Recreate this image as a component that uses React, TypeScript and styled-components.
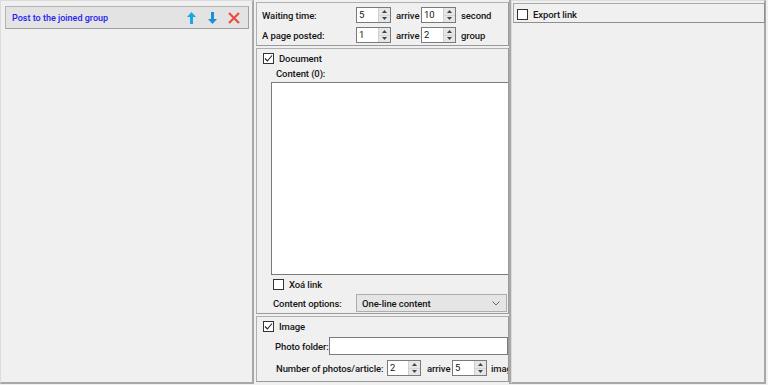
import { FC } from 'react';
import styled, { createGlobalStyle } from 'styled-components';

const GlobalStyle = createGlobalStyle`
  html, body {
    margin: 0;
    padding: 0;
    background: #f0f0f0;
  }
  body {
    font-family: Roboto, 'Noto Sans', sans-serif;
    font-size: 9.5px;
    font-weight: 500;
    letter-spacing: -0.1px;
    color: #151515;
  }
`;

const Window = styled.div`
  display: flex;
  width: 768px;
  height: 385px;
  background: #f0f0f0;
  overflow: hidden;
`;

const Panel = styled.div<{ $width: number }>`
  box-sizing: border-box;
  width: ${(p) => p.$width}px;
  height: 384px;
  border-top: 1px solid #dcdcdc;
  border-left: 1px solid #dcdcdc;
  border-right: 2px solid #a8a8a8;
  border-bottom: 2px solid #a8a8a8;
  flex-shrink: 0;
`;

const LeftPanel = styled(Panel)`
  padding: 5px 4px 0 4px;
`;

const TaskBar = styled.div`
  display: flex;
  align-items: center;
  box-sizing: border-box;
  height: 23px;
  width: 244px;
  padding: 0 8px 0 6px;
  background: #e3e3e3;
  border: 1px solid #b4b4b4;
  border-right-color: #a0a0a0;
  border-bottom-color: #a0a0a0;
`;

const TaskTitle = styled.span`
  flex: 1;
  color: #2222f2;
  font-size: 9px;
  font-weight: 500;
  letter-spacing: 0;
`;

const IconGroup = styled.div`
  display: flex;
  align-items: center;
  gap: 8px;
`;

const IconSlot = styled.span`
  display: flex;
  width: 13px;
  height: 13px;
  align-items: center;
  justify-content: center;
`;

const MiddleColumn = styled.div`
  display: flex;
  flex-direction: column;
  gap: 2px;
  box-sizing: border-box;
  width: 255px;
  height: 384px;
  margin-left: 2px;
  padding-top: 2px;
  border-right: 2px solid #a8a8a8;
  flex-shrink: 0;
`;

const Group = styled.div<{ $height: number }>`
  box-sizing: border-box;
  height: ${(p) => p.$height}px;
  border: 1px solid #b0b0b0;
  border-right-color: #9a9a9a;
  border-bottom-color: #9a9a9a;
  overflow: hidden;
`;

const TimingGroup = styled(Group)`
  display: flex;
  flex-direction: column;
  padding: 2px 0 0 5px;
`;

const Row = styled.div<{ $top?: number; $left?: number; $height?: number }>`
  display: flex;
  align-items: center;
  flex-shrink: 0;
  height: ${(p) => (p.$height ? `${p.$height}px` : 'auto')};
  margin: ${(p) => p.$top ?? 0}px 0 0 ${(p) => p.$left ?? 0}px;
`;

const Label = styled.span<{ $pad?: number; $w?: number }>`
  box-sizing: border-box;
  flex-shrink: 0;
  width: ${(p) => (p.$w ? `${p.$w}px` : 'auto')};
  padding-left: ${(p) => p.$pad ?? 0}px;
  white-space: nowrap;
`;

const SpinBox = styled.div<{ $w?: number }>`
  display: flex;
  flex-shrink: 0;
  box-sizing: border-box;
  width: ${(p) => p.$w ?? 35}px;
  height: 16px;
  border: 1px solid #7a7a7a;
  background: #fff;
`;

const SpinValue = styled.span`
  flex: 1;
  padding-left: 2px;
  line-height: 13px;
  font-weight: 400;
`;

const SpinButtons = styled.span`
  display: flex;
  flex-direction: column;
  width: 11px;
  background: #e6e6e6;
  border-left: 1px solid #d0d0d0;
`;

const SpinHalf = styled.span`
  flex: 1;
  display: flex;
  align-items: center;
  justify-content: center;
  &:first-child {
    border-bottom: 1px solid #d4d4d4;
  }
`;

const SectionGroup = styled(Group)`
  display: flex;
  flex-direction: column;
  padding: 2px 0 0 6px;
`;

const CheckRow = styled.label`
  display: flex;
  align-items: center;
  gap: 5px;
  height: 14px;
  flex-shrink: 0;
`;

const Box = styled.span`
  display: flex;
  align-items: center;
  justify-content: center;
  box-sizing: border-box;
  width: 11px;
  height: 11px;
  border: 1px solid #333;
  background: #fff;
`;

const SubLabel = styled.div`
  margin: 2px 0 0 13px;
  height: 13px;
  line-height: 13px;
  flex-shrink: 0;
`;

const TextArea = styled.div`
  box-sizing: border-box;
  flex-shrink: 0;
  margin: 2px 0 0 8px;
  width: 260px;
  height: 193px;
  background: #fff;
  border: 1px solid #7a7a7a;
  border-right: none;
`;

const Select = styled.div`
  display: flex;
  align-items: center;
  box-sizing: border-box;
  width: 151px;
  height: 18px;
  padding: 0 6px 0 5px;
  background: #e5e5e5;
  border: 1px solid #adadad;
`;

const SelectText = styled.span`
  flex: 1;
`;

const TextInput = styled.div`
  box-sizing: border-box;
  width: 179px;
  height: 18px;
  background: #fff;
  border: 1px solid #7a7a7a;
`;

const RightPanel = styled(Panel)`
  padding: 2px 1px 0 1px;
`;

const ExportBox = styled.div`
  box-sizing: border-box;
  height: 20px;
  width: 252px;
  padding: 3px 0 0 3px;
  border: 1px solid #a8a8a8;
  border-right-color: #8f8f8f;
  border-bottom-color: #8f8f8f;
`;

const Check: FC<{ checked?: boolean }> = ({ checked }) => (
  <Box>
    {checked && (
      <svg width="9" height="9" viewBox="0 0 9 9">
        <path d="M1 4.5 L3.4 7 L8 1.5" fill="none" stroke="#222" strokeWidth="1.1" />
      </svg>
    )}
  </Box>
);

const Spin: FC<{ value: string; w?: number }> = ({ value, w }) => (
  <SpinBox $w={w}>
    <SpinValue>{value}</SpinValue>
    <SpinButtons>
      <SpinHalf>
        <svg width="5" height="3" viewBox="0 0 5 3">
          <path d="M0 3 L2.5 0 L5 3 Z" fill="#444" />
        </svg>
      </SpinHalf>
      <SpinHalf>
        <svg width="5" height="3" viewBox="0 0 5 3">
          <path d="M0 0 L2.5 3 L5 0 Z" fill="#444" />
        </svg>
      </SpinHalf>
    </SpinButtons>
  </SpinBox>
);

const Arrow: FC<{ down?: boolean; color: string }> = ({ down, color }) => (
  <svg
    width="9"
    height="12"
    viewBox="0 0 9 12"
    style={{ transform: down ? 'rotate(180deg)' : undefined }}
  >
    <path d="M4.5 0 L9 5 L6 5 L6 12 L3 12 L3 5 L0 5 Z" fill={color} />
  </svg>
);

const App: FC = () => (
  <>
    <GlobalStyle />
    <Window>
      <LeftPanel $width={254}>
        <TaskBar>
          <TaskTitle>Post to the joined group</TaskTitle>
          <IconGroup>
            <IconSlot>
              <Arrow color="#19a7e6" />
            </IconSlot>
            <IconSlot>
              <Arrow down color="#1b8fdc" />
            </IconSlot>
            <IconSlot>
              <svg width="12" height="12" viewBox="0 0 12 12">
                <path d="M1 1 L11 11 M11 1 L1 11" stroke="#ec4a45" strokeWidth="2.2" />
              </svg>
            </IconSlot>
          </IconGroup>
        </TaskBar>
      </LeftPanel>

      <MiddleColumn>
        <TimingGroup $height={44}>
          <Row $height={20}>
            <Label $w={94}>Waiting time:</Label>
            <Spin value="5" />
            <Label $w={30} $pad={5}>arrive</Label>
            <Spin value="10" />
            <Label $pad={5}>second</Label>
          </Row>
          <Row $height={20}>
            <Label $w={94}>A page posted:</Label>
            <Spin value="1" />
            <Label $w={30} $pad={5}>arrive</Label>
            <Spin value="2" />
            <Label $pad={5}>group</Label>
          </Row>
        </TimingGroup>

        <SectionGroup $height={266}>
          <CheckRow>
            <Check checked />
            <span>Document</span>
          </CheckRow>
          <SubLabel>Content (0):</SubLabel>
          <TextArea />
          <Row $top={2} $left={10}>
            <CheckRow>
              <Check />
              <span>Xoá link</span>
            </CheckRow>
          </Row>
          <Row $top={3} $left={10}>
            <Label $w={83}>Content options:</Label>
            <Select>
              <SelectText>One-line content</SelectText>
              <svg width="8" height="5" viewBox="0 0 8 5">
                <path d="M0.5 0.5 L4 4 L7.5 0.5" fill="none" stroke="#666" strokeWidth="1" />
              </svg>
            </Select>
          </Row>
        </SectionGroup>

        <SectionGroup $height={66}>
          <CheckRow>
            <Check checked />
            <span>Image</span>
          </CheckRow>
          <Row $top={4} $left={12}>
            <Label $w={54}>Photo folder:</Label>
            <TextInput />
          </Row>
          <Row $top={5} $left={13}>
            <Label $w={111}>Number of photos/article:</Label>
            <Spin value="2" w={34} />
            <Label $w={31} $pad={6}>arrive</Label>
            <Spin value="5" />
            <Label $pad={4}>images</Label>
          </Row>
        </SectionGroup>
      </MiddleColumn>

      <RightPanel $width={255}>
        <ExportBox>
          <CheckRow>
            <Check />
            <span>Export link</span>
          </CheckRow>
        </ExportBox>
      </RightPanel>
    </Window>
  </>
);

export default App;
